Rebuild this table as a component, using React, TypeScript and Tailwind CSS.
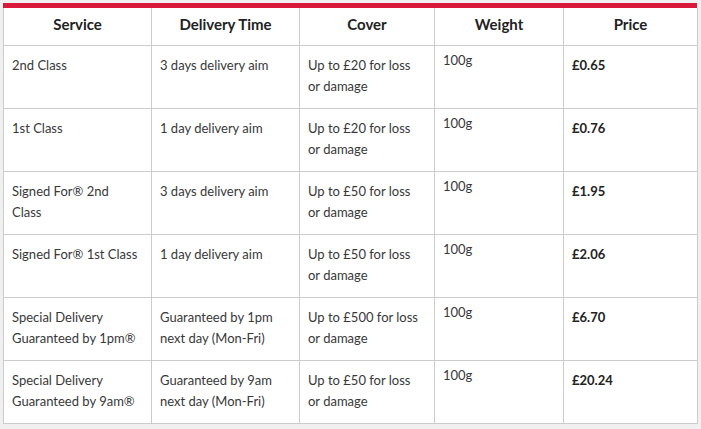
const rows = [
  {
    service: "2nd Class",
    time: "3 days delivery aim",
    cover: "Up to £20 for loss or damage",
    price: "£0.65",
  },
  {
    service: "1st Class",
    time: "1 day delivery aim",
    cover: "Up to £20 for loss or damage",
    price: "£0.76",
  },
  {
    service: "Signed For® 2nd Class",
    time: "3 days delivery aim",
    cover: "Up to £50 for loss or damage",
    price: "£1.95",
  },
  {
    service: "Signed For® 1st Class",
    time: "1 day delivery aim",
    cover: "Up to £50 for loss or damage",
    price: "£2.06",
  },
  {
    service: "Special Delivery Guaranteed by 1pm®",
    time: "Guaranteed by 1pm next day (Mon-Fri)",
    cover: "Up to £500 for loss or damage",
    price: "£6.70",
  },
  {
    service: "Special Delivery Guaranteed by 9am®",
    time: "Guaranteed by 9am next day (Mon-Fri)",
    cover: "Up to £50 for loss or damage",
    price: "£20.24",
  },
];

const headers = ["Service", "Delivery Time", "Cover", "Weight", "Price"];

const cell = "border border-[#cccccc] pl-2 pr-3 pb-[11px] pt-[9px] align-top leading-[21px]";

export default function App() {
  return (
    <div className="min-h-[429px] w-[701px] bg-[#f0f0f0] pl-[3px] pt-[3px] font-['Lato','Noto_Sans',sans-serif] text-[13px] text-[#383838]">
      <div className="h-[5px] w-[694px] bg-[#da1a3b]" />
      <table className="w-[694px] table-fixed border-collapse bg-white">
        <colgroup>
          <col className="w-[148px]" />
          <col className="w-[148px]" />
          <col className="w-[135px]" />
          <col className="w-[129px]" />
          <col className="w-[134px]" />
        </colgroup>
        <thead>
          <tr>
            {headers.map((h) => (
              <th
                key={h}
                className="border border-t-0 border-[#cccccc] pb-[11px] pt-1.5 text-center text-[15px] font-bold leading-5 text-[#222]"
              >
                {h}
              </th>
            ))}
          </tr>
        </thead>
        <tbody>
          {rows.map((row) => (
            <tr key={row.service}>
              <td className={`${cell} h-[63px]`}>{row.service}</td>
              <td className={cell}>{row.time}</td>
              <td className={cell}>{row.cover}</td>
              <td className="border border-[#cccccc] px-2 pb-3 pt-1 align-top leading-[21px]">
                100g
              </td>
              <td className="border border-[#cccccc] px-2 pb-[11px] pt-[9px] align-top font-bold leading-[21px] text-[#222]">
                {row.price}
              </td>
            </tr>
          ))}
        </tbody>
      </table>
    </div>
  );
}
